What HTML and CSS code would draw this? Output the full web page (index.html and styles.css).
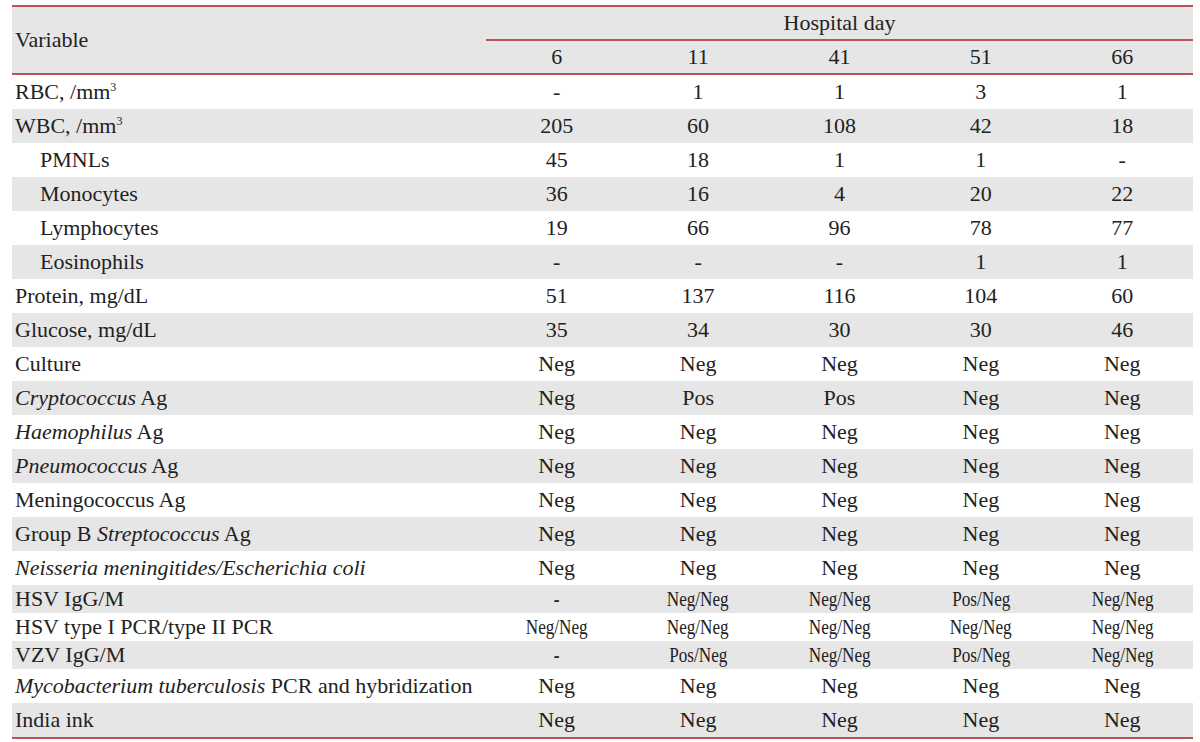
FILE: index.html
```html
<!DOCTYPE html>
<html>
<head>
<meta charset="utf-8">
<link rel="stylesheet" href="styles.css">
</head>
<body>
<div class="wrap">
<table class="data">
  <colgroup>
    <col class="c-var"><col class="c-day"><col class="c-day"><col class="c-day"><col class="c-day"><col class="c-day">
  </colgroup>
  <thead>
    <tr class="h1">
      <th class="var" rowspan="2">Variable</th>
      <th class="group" colspan="5">Hospital day</th>
    </tr>
    <tr class="h2">
      <th>6</th><th>11</th><th>41</th><th>51</th><th>66</th>
    </tr>
  </thead>
  <tbody>
    <tr><td class="var">RBC, /mm<sup>3</sup></td><td>-</td><td>1</td><td>1</td><td>3</td><td>1</td></tr>
    <tr class="alt"><td class="var">WBC, /mm<sup>3</sup></td><td>205</td><td>60</td><td>108</td><td>42</td><td>18</td></tr>
    <tr><td class="var sub">PMNLs</td><td>45</td><td>18</td><td>1</td><td>1</td><td>-</td></tr>
    <tr class="alt"><td class="var sub">Monocytes</td><td>36</td><td>16</td><td>4</td><td>20</td><td>22</td></tr>
    <tr><td class="var sub">Lymphocytes</td><td>19</td><td>66</td><td>96</td><td>78</td><td>77</td></tr>
    <tr class="alt"><td class="var sub">Eosinophils</td><td>-</td><td>-</td><td>-</td><td>1</td><td>1</td></tr>
    <tr><td class="var">Protein, mg/dL</td><td>51</td><td>137</td><td>116</td><td>104</td><td>60</td></tr>
    <tr class="alt"><td class="var">Glucose, mg/dL</td><td>35</td><td>34</td><td>30</td><td>30</td><td>46</td></tr>
    <tr><td class="var">Culture</td><td>Neg</td><td>Neg</td><td>Neg</td><td>Neg</td><td>Neg</td></tr>
    <tr class="alt"><td class="var"><i>Cryptococcus</i> Ag</td><td>Neg</td><td>Pos</td><td>Pos</td><td>Neg</td><td>Neg</td></tr>
    <tr><td class="var"><i>Haemophilus</i> Ag</td><td>Neg</td><td>Neg</td><td>Neg</td><td>Neg</td><td>Neg</td></tr>
    <tr class="alt"><td class="var"><i>Pneumococcus</i> Ag</td><td>Neg</td><td>Neg</td><td>Neg</td><td>Neg</td><td>Neg</td></tr>
    <tr><td class="var">Meningococcus Ag</td><td>Neg</td><td>Neg</td><td>Neg</td><td>Neg</td><td>Neg</td></tr>
    <tr class="alt"><td class="var">Group B <i>Streptococcus</i> Ag</td><td>Neg</td><td>Neg</td><td>Neg</td><td>Neg</td><td>Neg</td></tr>
    <tr><td class="var"><i>Neisseria meningitides/Escherichia coli</i></td><td>Neg</td><td>Neg</td><td>Neg</td><td>Neg</td><td>Neg</td></tr>
    <tr class="alt tight"><td class="var">HSV IgG/M</td><td><span class="cond b">-</span></td><td><span class="cond">Neg/Neg</span></td><td><span class="cond">Neg/Neg</span></td><td><span class="cond">Pos/Neg</span></td><td><span class="cond">Neg/Neg</span></td></tr>
    <tr class="tight"><td class="var">HSV type I PCR/type II PCR</td><td><span class="cond">Neg/Neg</span></td><td><span class="cond">Neg/Neg</span></td><td><span class="cond">Neg/Neg</span></td><td><span class="cond">Neg/Neg</span></td><td><span class="cond">Neg/Neg</span></td></tr>
    <tr class="alt tight"><td class="var">VZV IgG/M</td><td><span class="cond b">-</span></td><td><span class="cond">Pos/Neg</span></td><td><span class="cond">Neg/Neg</span></td><td><span class="cond">Pos/Neg</span></td><td><span class="cond">Neg/Neg</span></td></tr>
    <tr><td class="var"><i>Mycobacterium tuberculosis</i> PCR and hybridization</td><td>Neg</td><td>Neg</td><td>Neg</td><td>Neg</td><td>Neg</td></tr>
    <tr class="alt last"><td class="var">India ink</td><td>Neg</td><td>Neg</td><td>Neg</td><td>Neg</td><td>Neg</td></tr>
  </tbody>
</table>
</div>
</body>
</html>
```

FILE: styles.css
```css
html, body {
  margin: 0;
  padding: 0;
  background: #ffffff;
}
.wrap {
  padding: 5px 7px 0 12px;
}
.data {
  width: 1181px;
  border-collapse: collapse;
  table-layout: fixed;
  font-family: "Liberation Serif", "DejaVu Serif", serif;
  font-size: 22px;
  font-variant-numeric: oldstyle-nums;
  color: #222222;
  border-top: 2px solid #b8555a;
  border-bottom: 2px solid #b8555a;
}
.c-var { width: 474px; }
.c-day { width: 141.4px; }
th, td {
  padding: 0;
  font-weight: normal;
  text-align: center;
  vertical-align: middle;
  height: 34px;
  line-height: 24px;
  white-space: nowrap;
}
thead tr { background: #e6e6e6; }
.h1 th { height: 32px; }
.h2 th { height: 32px; border-top: 2px solid #b8555a; }
.h2 { border-bottom: 2px solid #b8555a; }
.h1 th.var { border-bottom: 2px solid #b8555a; }
th.var, td.var {
  text-align: left;
  padding-left: 3px;
}
td.sub { padding-left: 28px; }
tr.alt { background: #e6e6e6; }
tr.tight td { height: 28px; }
.cond {
  display: inline-block;
  transform: scaleX(0.78);
}
.b { font-weight: bold; }
sup {
  font-size: 12px;
  line-height: 0;
  vertical-align: 8px;
}
```
